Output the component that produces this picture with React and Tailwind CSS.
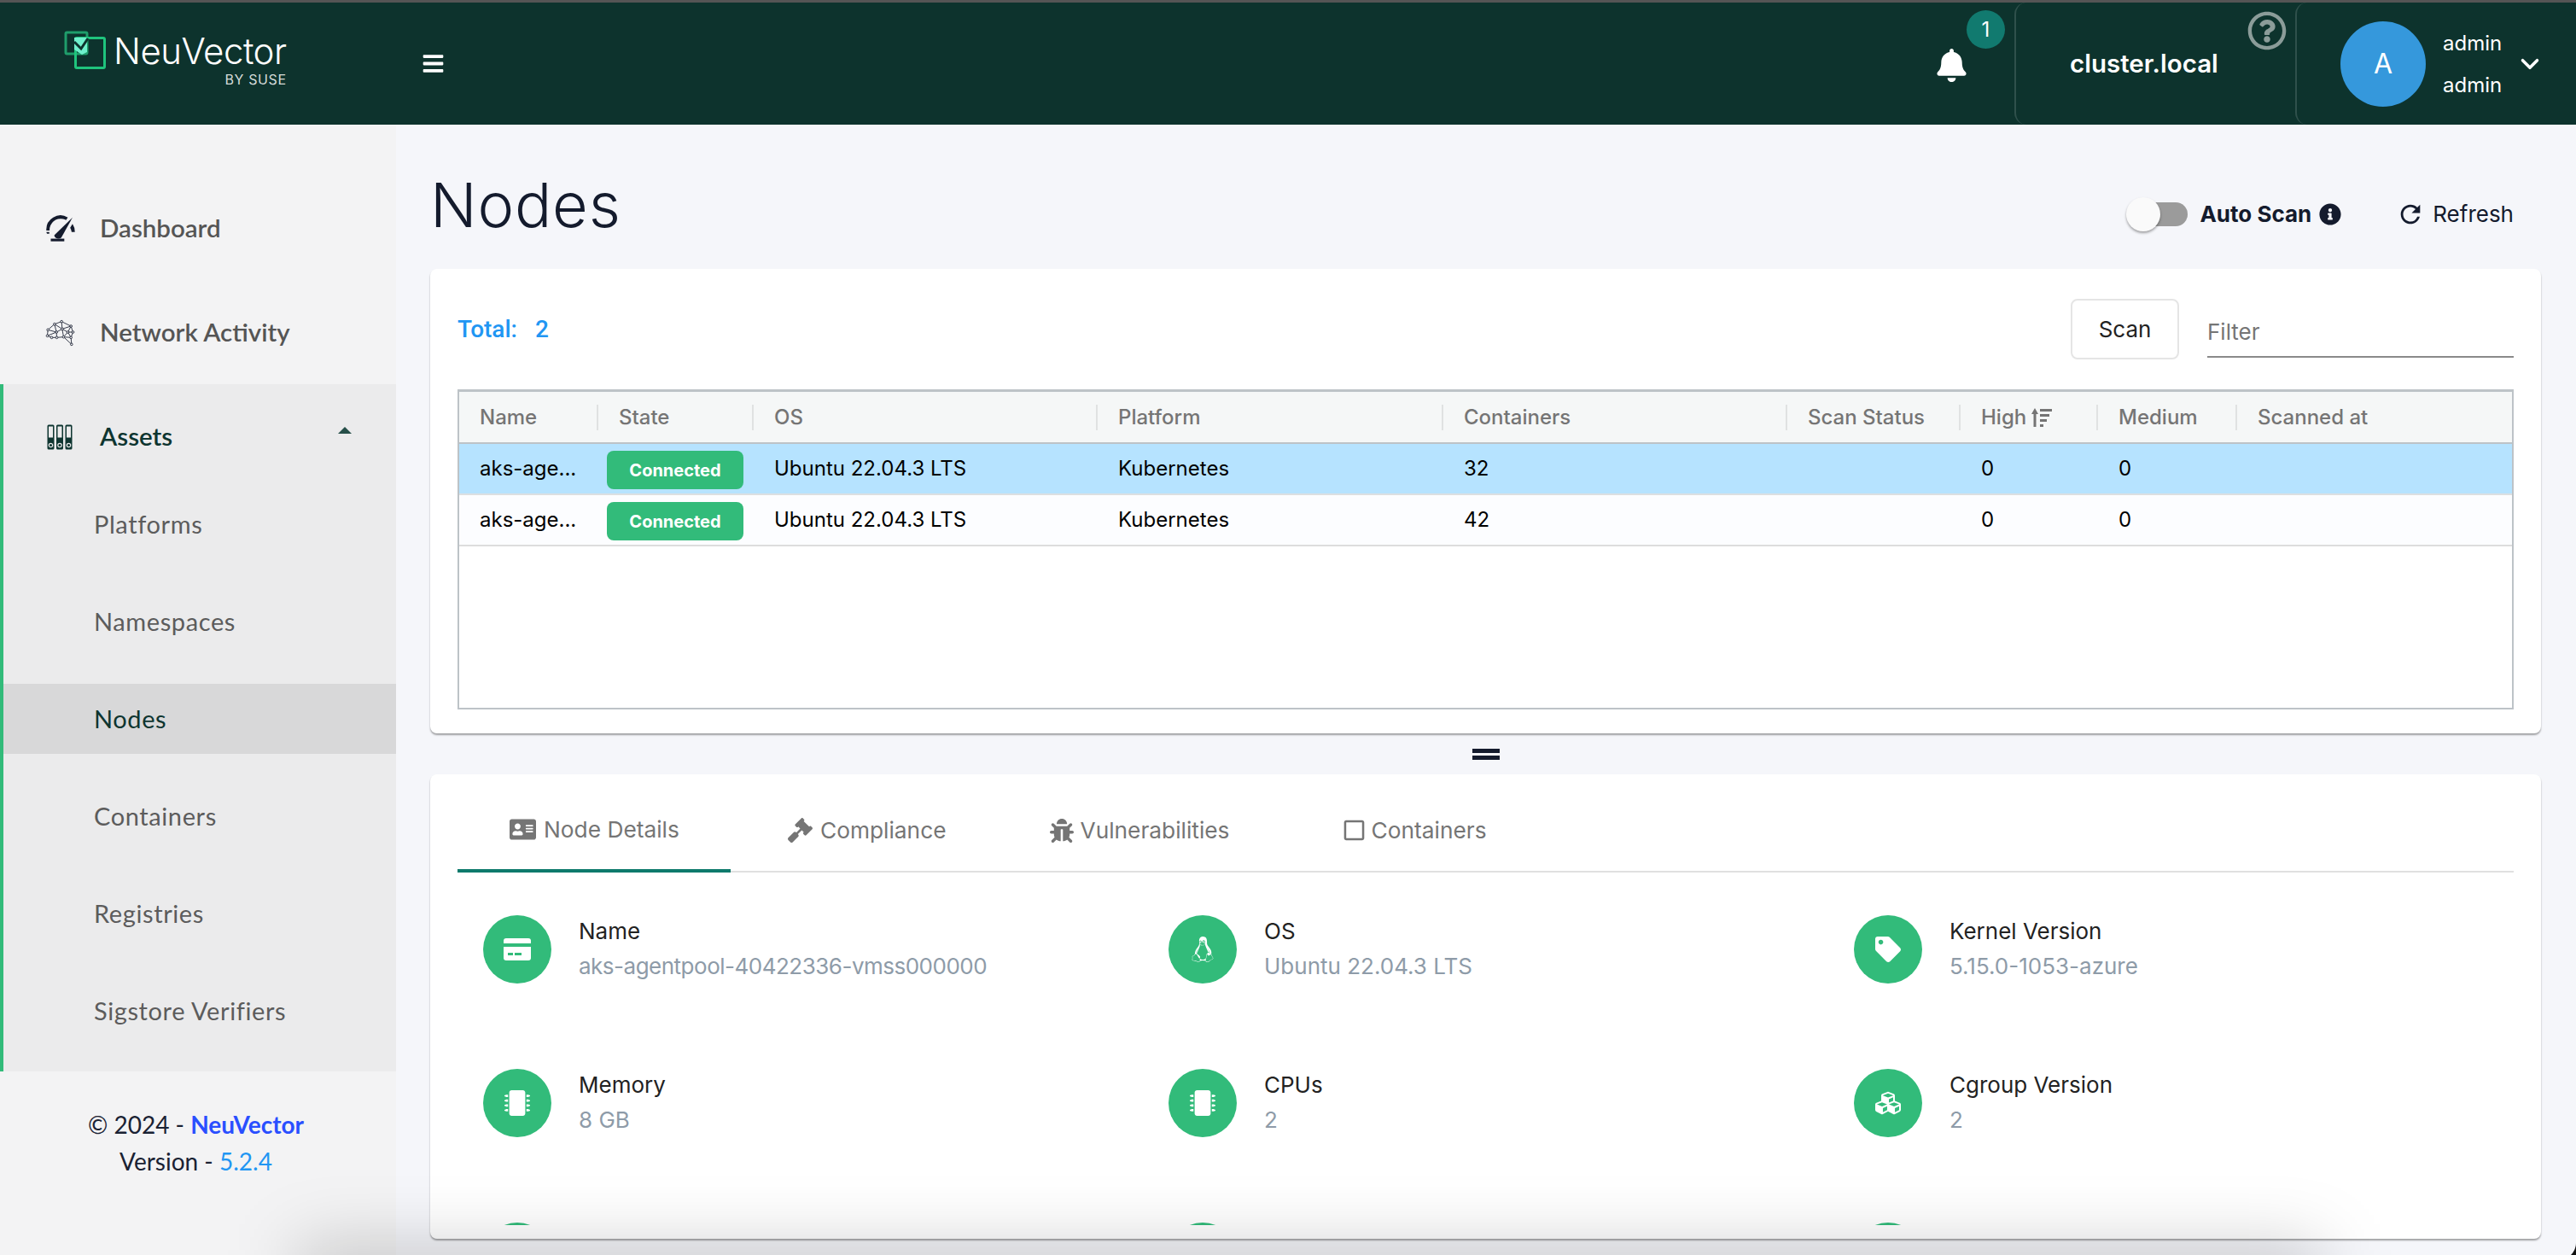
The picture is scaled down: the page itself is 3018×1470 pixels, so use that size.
import React from "react";
import { FaBars, FaBell, FaRegQuestionCircle, FaInfoCircle, FaAddressCard, FaGavel, FaBug, FaRegSquare, FaLinux, FaMicrochip, FaTag, FaCubes } from "react-icons/fa";
import { MdRefresh } from "react-icons/md";
import { ChevronDown } from "lucide-react";

const COLS = "grid grid-cols-[161px_182px_403px_405px_403px_203px_161px_163px_1fr]";

const SUBMENU = ["Platforms", "Namespaces", "Nodes", "Containers", "Registries", "Sigstore Verifiers"];
const HEADERS = ["Name", "State", "OS", "Platform", "Containers", "Scan Status", "High", "Medium", "Scanned at"];

const ROWS = [
  { containers: "32", bg: "bg-[#b6e3ff]", line: "border-[#dcdfe1]" },
  { containers: "42", bg: "bg-[#fcfdff]", line: "border-[#dddddd]" },
];

function CardIcon() {
  return (
    <svg width="32" height="26" viewBox="0 0 32 26">
      <path d="M3 0h26a3 3 0 0 1 3 3v3H0V3a3 3 0 0 1 3-3z" fill="#fff" />
      <path d="M0 10h32v13a3 3 0 0 1-3 3H3a3 3 0 0 1-3-3z" fill="#fff" />
      <rect x="5" y="17" width="6" height="3" fill="#32bb7a" />
      <rect x="13" y="17" width="8" height="3" fill="#32bb7a" />
    </svg>
  );
}

const INFO = [
  { label: "Name", value: "aks-agentpool-40422336-vmss000000", tight: true, icon: <CardIcon /> },
  { label: "OS", value: "Ubuntu 22.04.3 LTS", icon: <FaLinux size={30} /> },
  { label: "Kernel Version", value: "5.15.0-1053-azure", icon: <FaTag size={30} /> },
  { label: "Memory", value: "8 GB", icon: <FaMicrochip size={30} /> },
  { label: "CPUs", value: "2", icon: <FaMicrochip size={30} /> },
  { label: "Cgroup Version", value: "2", icon: <FaCubes size={30} /> },
  { label: "", value: "", icon: null },
  { label: "", value: "", icon: null },
  { label: "", value: "", icon: null },
];

function Logo() {
  return (
    <svg width="50" height="46" viewBox="0 0 50 46" className="shrink-0">
      <rect x="2" y="2" width="25" height="25" rx="1.5" fill="none" stroke="#1f9e6b" strokeWidth="3" />
      <rect x="13.5" y="8.5" width="34" height="35" rx="1.5" fill="none" stroke="#1fc47d" strokeWidth="3" />
      <path d="M12 8h15v17l-6 3-9-6z" fill="#6ff0cc" />
      <path d="M12 13l8 8 8-12" fill="none" stroke="#0d332d" strokeWidth="3" />
    </svg>
  );
}

function GaugeIcon() {
  return (
    <svg width="35" height="31" viewBox="0 0 100 90" fill="#141b2d">
      <path d="M3 52A48 48 0 0 1 76 8l-6 9a38 38 0 0 0-10-4 38 38 0 0 0-46 39z" />
      <path d="M3 57h10v6H5z" />
      <path d="M100 57A48 48 0 0 0 92 30L84 43q4 7 5 14z" />
      <path d="M30 68l62-60-38 68q-5 5-14 3-10-3-10-11z" />
      <rect x="18" y="80" width="46" height="9" />
    </svg>
  );
}

function BrainIcon() {
  const nodes = [[93, 396], [68, 405], [126, 412], [45, 425], [75, 433], [95, 422], [115, 433], [133, 433], [43, 446], [58, 452], [76, 452], [100, 450], [126, 452], [128, 476]];
  const links = [[0, 1], [0, 2], [0, 5], [1, 3], [1, 4], [1, 5], [2, 5], [2, 6], [2, 7], [3, 4], [3, 8], [4, 5], [4, 8], [4, 10], [5, 6], [5, 11], [6, 7], [6, 11], [6, 12], [7, 12], [8, 9], [9, 10], [10, 11], [11, 12], [12, 13], [11, 13]];
  return (
    <svg width="35" height="32" viewBox="36 388 104 96" fill="#f3f3f4" stroke="#141b2d" strokeWidth="2.5">
      {links.map(([a, b], i) => (
        <line key={i} x1={nodes[a][0]} y1={nodes[a][1]} x2={nodes[b][0]} y2={nodes[b][1]} />
      ))}
      {nodes.map(([x, y], i) => (
        <circle key={i} cx={x} cy={y} r="4" />
      ))}
    </svg>
  );
}

function BindersIcon() {
  return (
    <svg width="30" height="30" viewBox="0 0 30 30">
      {[0, 10.5, 21].map((x) => (
        <g key={x}>
          <rect x={x + 0.5} y="0.5" width="8" height="29" rx="1.5" fill="#0e3530" />
          <rect x={x + 2} y="2.5" width="5" height="13" fill="#ebebec" />
          <circle cx={x + 4.5} cy="24.5" r="2.2" fill="none" stroke="#ebebec" strokeWidth="1.2" />
        </g>
      ))}
    </svg>
  );
}

function SortIcon() {
  return (
    <svg width="24" height="22" viewBox="0 0 24 22" fill="#757575" className="ml-[6px]">
      <path d="M4 0l4 7H5.5v15h-3V7H0z" />
      <rect x="10" y="1" width="14" height="3" />
      <rect x="10" y="7" width="11" height="3" />
      <rect x="10" y="13" width="8" height="3" />
      <rect x="10" y="19" width="4" height="3" />
    </svg>
  );
}

function Sidebar() {
  return (
    <aside className="w-[464px] shrink-0 flex flex-col bg-[#f3f3f4] pt-[62px] font-['Lato',sans-serif]">
      <div className="h-[121px] flex items-center pl-[53px] pb-[2px] gap-[29px] text-[29.5px] font-semibold text-[#555555]">
        <GaugeIcon />
        <span>Dashboard</span>
      </div>
      <div className="h-[121px] flex items-center pl-[53px] gap-[29px] text-[29.5px] font-semibold text-[#555555]">
        <BrainIcon />
        <span>Network Activity</span>
      </div>
      <div className="border-l-4 border-[#32bb7a] bg-[#ebebec] pb-[30px]">
        <div className="h-[123px] flex items-center pl-[51px] gap-[32px] text-[29.5px] font-semibold text-[#0e3530]">
          <BindersIcon />
          <span>Assets</span>
          <svg width="16" height="8" viewBox="0 0 16 8" className="ml-auto mr-[52px] mb-[16px]">
            <polygon points="8,0 16,8 0,8" fill="#264f49" />
          </svg>
        </div>
        <div className="flex flex-col gap-[32px]">
          {SUBMENU.map((s) => (
            <div key={s} className={`h-[82px] flex items-center pl-[106px] text-[29px] tracking-[0.6px] ${s === "Nodes" ? "bg-[#d8d8d9] text-[#0e3530]" : "text-[#5c5c5c]"}`}>
              {s}
            </div>
          ))}
        </div>
      </div>
      <div className="pt-[41px] pr-[5px] text-center text-[28px] leading-[43px] text-[#1a2233]">
        <div>© 2024 - <span className="font-bold text-[#2a4fff]">NeuVector</span></div>
        <div>Version - <span className="text-[#2196f3]">5.2.4</span></div>
      </div>
    </aside>
  );
}

function Header() {
  return (
    <header className="h-[146px] shrink-0 flex border-t-[3px] border-[#555555] bg-[#0d332d] text-white">
      <div className="w-[494px] shrink-0 pl-[75px] pt-[33px] flex items-start gap-[8px]">
        <Logo />
        <div className="flex flex-col items-end">
          <div className="text-[42px] leading-[48px] font-light tracking-[-0.5px]">NeuVector</div>
          <div className="text-[16px] leading-[18px] tracking-[0.6px] text-[#d5dcda]">BY SUSE</div>
        </div>
      </div>
      <div className="flex items-center">
        <FaBars size={27} />
      </div>
      <div className="ml-auto flex">
        <div className="relative self-center mt-[4px] mr-[54px]">
          <FaBell size={39} />
          <div className="absolute left-[37px] top-[-45px] w-[45px] h-[45px] rounded-full bg-[#117a6f] flex items-center justify-center text-[24px]">1</div>
        </div>
        <div className="relative w-[329px] border-l-2 border-[#2f504b] rounded-l-[14px] flex items-center pl-[63px] text-[29.5px] font-semibold">
          cluster.local
          <FaRegQuestionCircle size={46} className="absolute right-[10px] top-[10px] text-[#8b9c99]" />
        </div>
        <div className="w-[329px] border-l-2 border-[#2f504b] rounded-l-[14px] flex items-center pl-[51px]">
          <div className="w-[100px] h-[100px] rounded-full bg-[#3598dc] flex items-center justify-center text-[32px]">A</div>
          <div className="ml-[20px] flex flex-col gap-[24px] text-[24px] leading-[25px]">
            <span>admin</span>
            <span>admin</span>
          </div>
          <ChevronDown size={34} strokeWidth={2.5} className="ml-[16px]" />
        </div>
      </div>
    </header>
  );
}

function NodesTable() {
  return (
    <div className="h-[375px] border-2 border-[#bdc3c7] border-t-[3px] bg-white">
      <div className={`${COLS} h-[61px] bg-[#f5f7f7] border-b-2 border-[#bdc3c7] items-center text-[24px] font-medium text-[#757575]`}>
        {HEADERS.map((h, i) => (
          <div key={h} className={`h-[30px] flex items-center ${i === 0 ? "pl-[24px]" : "border-l-2 border-[#e0e2e2] pl-[24px]"}`}>
            {h}
            {h === "High" && <SortIcon />}
          </div>
        ))}
      </div>
      {ROWS.map((r) => (
        <div key={r.containers} className={`${COLS} h-[60px] ${r.bg} border-b-2 ${r.line} items-center text-[24px] text-black`}>
          <div className="pl-[24px]">aks-age...</div>
          <div className="pl-[12px]">
            <span className="mt-[3px] w-[160px] h-[45px] rounded-[8px] bg-[#32bb7a] flex items-center justify-center text-[20px] font-bold text-white">Connected</span>
          </div>
          <div className="pl-[26px]">Ubuntu 22.04.3 LTS</div>
          <div className="pl-[26px]">Kubernetes</div>
          <div className="pl-[26px]">{r.containers}</div>
          <div />
          <div className="pl-[26px]">0</div>
          <div className="pl-[26px]">0</div>
          <div />
        </div>
      ))}
    </div>
  );
}

function Tabs() {
  return (
    <div className="h-[85px] flex border-b-2 border-[#e0e0e0] text-[26.3px] text-[#757575]">
      <div className="w-[320px] -mb-[2px] pb-[12px] border-b-4 border-[#0e7a6c] flex items-center pl-[61px] gap-[9px]">
        <FaAddressCard size={31} />
        Node Details
      </div>
      <div className="flex items-center pb-[12px] ml-[67px] gap-[9px]">
        <FaGavel size={29} />
        Compliance
      </div>
      <div className="flex items-center pb-[12px] ml-[121px] gap-[8px]">
        <FaBug size={28} />
        Vulnerabilities
      </div>
      <div className="flex items-center pb-[12px] ml-[132px] gap-[7px]">
        <FaRegSquare size={27} />
        Containers
      </div>
    </div>
  );
}

function Details() {
  return (
    <div className="h-[413px] overflow-hidden grid grid-cols-3 auto-rows-[180px] pt-[50px]">
      {INFO.map((f, i) => (
        <div key={i} className="flex pl-[30px]">
          <div className="w-[80px] h-[80px] rounded-full bg-[#32bb7a] text-white flex items-center justify-center shrink-0">{f.icon}</div>
          <div className="ml-[32px] pt-[3px]">
            <div className="text-[26px] leading-[32px] text-[#222222]">{f.label}</div>
            <div className={`mt-[9px] text-[26px] leading-[32px] text-[#8e9ba8] ${f.tight ? "tracking-[-0.5px]" : ""}`}>{f.value}</div>
          </div>
        </div>
      ))}
    </div>
  );
}

export default function App() {
  return (
    <div className="relative w-[3018px] h-[1470px] overflow-hidden flex flex-col bg-[#f5f6fa] font-['Inter',sans-serif]">
      <Header />
      <div className="flex flex-1 min-h-0">
        <Sidebar />
        <main className="flex-1 pl-[40px] pr-[41px]">
          <div className="h-[169px] flex items-center pt-[40px] text-[#141b2d]">
            <h1 className="text-[72px] leading-[80px] font-light tracking-[0.8px] mb-[22px]">Nodes</h1>
            <div className="relative w-[72px] h-[40px] ml-auto mr-[-2px]">
              <div className="absolute left-[12px] top-[6px] w-[60px] h-[28px] rounded-full bg-[#9b9b9b]" />
              <div className="absolute left-0 top-0 w-[40px] h-[40px] rounded-full bg-[#fafafa] shadow-[0_2px_3px_rgba(0,0,0,0.35)]" />
            </div>
            <span className="ml-[16px] text-[26px] font-bold">Auto Scan</span>
            <FaInfoCircle size={26} className="ml-[9px]" />
            <MdRefresh size={34} className="ml-[64px]" />
            <span className="ml-[9px] mr-[32px] text-[26px]">Refresh</span>
          </div>

          <section className="h-[544px] rounded-[8px] bg-white px-[32px] shadow-[0_2px_2px_rgba(0,0,0,0.35)]">
            <div className="h-[141px] flex items-center">
              <span className="font-['Roboto',sans-serif] text-[28px] font-medium text-[#2196f3]">Total:</span>
              <span className="ml-[21px] font-['Roboto',sans-serif] text-[28px] font-medium text-[#2196f3]">2</span>
              <button className="ml-auto w-[127px] h-[71px] rounded-[8px] border-2 border-[#e5e5e5] text-[26px] text-[#222222]">Scan</button>
              <div className="ml-[33px] w-[359px] h-[66px] pb-[9px] border-b-2 border-[#8a8a8a] flex items-end text-[26px] text-[#757575]">Filter</div>
            </div>
            <NodesTable />
          </section>

          <div className="h-[48px] flex flex-col items-center justify-center gap-[3px]">
            <div className="w-[32px] h-[5px] bg-[#141b2d]" />
            <div className="w-[32px] h-[5px] bg-[#141b2d]" />
          </div>

          <section className="h-[544px] rounded-[8px] bg-white px-[32px] pt-[30px] shadow-[0_2px_2px_rgba(0,0,0,0.35)]">
            <Tabs />
            <Details />
          </section>
        </main>
      </div>
      {/* dock shadow at the bottom of the screenshot */}
      <div className="absolute left-[350px] right-[300px] bottom-[-60px] h-[70px] bg-black/20 blur-[40px] pointer-events-none" />
      <svg width="6" height="14" viewBox="0 0 6 14" className="absolute right-0 bottom-0">
        <path d="M6 0C6 6 3 11 0 14L6 14Z" fill="#111" />
      </svg>
    </div>
  );
}
